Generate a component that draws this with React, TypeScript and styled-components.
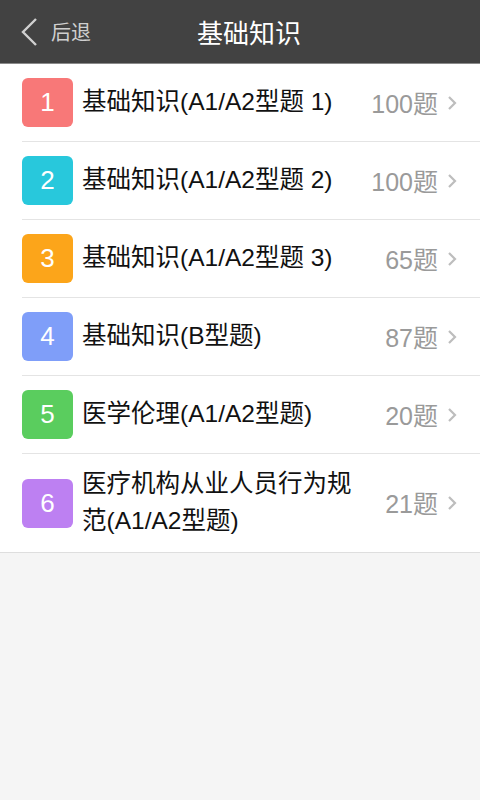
import React from "react";
import styled, { createGlobalStyle } from "styled-components";

const GlobalStyle = createGlobalStyle`
  html, body {
    margin: 0;
    padding: 0;
    background: #f5f5f5;
    font-family: "Liberation Sans", "Noto Sans CJK SC", sans-serif;
  }
`;

const Page = styled.div`
  width: 480px;
  min-height: 800px;
  background: #f5f5f5;
`;

const TopBar = styled.div`
  position: relative;
  display: flex;
  align-items: center;
  height: 63px;
  background: #424242;
  border-bottom: 1px solid #8a8a8a;
`;

const BackButton = styled.div`
  display: flex;
  align-items: center;
  gap: 13px;
  padding-left: 20px;
  color: #cfcfcf;
  font-size: 20px;
`;

const Title = styled.div`
  position: absolute;
  left: 0;
  right: 0;
  text-align: center;
  color: #ffffff;
  font-size: 26px;
  pointer-events: none;
  padding-left: 18px;
`;

const List = styled.div`
  background: #ffffff;
  border-bottom: 1px solid #dedede;
`;

const Row = styled.div<{ $tall?: boolean }>`
  display: flex;
  align-items: center;
  margin-left: 22px;
  padding-right: 23px;
  min-height: ${(p) => (p.$tall ? "98px" : "77px")};
  border-bottom: 1px solid #e4e4e4;

  &:last-child {
    border-bottom: none;
  }
`;

const Badge = styled.div<{ $color: string }>`
  flex: none;
  width: 51px;
  height: 49px;
  border-radius: 6px;
  background: ${(p) => p.$color};
  color: #ffffff;
  display: flex;
  align-items: center;
  justify-content: center;
  font-size: 26px;
`;

const Name = styled.div`
  flex: 1;
  margin-left: 9px;
  color: #111111;
  font-size: 24.5px;
  line-height: 37px;
  padding-right: 24px;
  margin-top: -2px;
`;

const Count = styled.div`
  color: #9a9a9a;
  font-size: 25px;
  white-space: nowrap;
  margin-top: -2px;
`;

const Chevron = styled.svg`
  margin-left: 9px;
  flex: none;
`;

const items = [
  { n: 1, color: "#f87878", name: "基础知识(A1/A2型题 1)", count: "100题" },
  { n: 2, color: "#28c8dc", name: "基础知识(A1/A2型题 2)", count: "100题" },
  { n: 3, color: "#fca51a", name: "基础知识(A1/A2型题 3)", count: "65题" },
  { n: 4, color: "#7f9ef9", name: "基础知识(B型题)", count: "87题" },
  { n: 5, color: "#5acd5e", name: "医学伦理(A1/A2型题)", count: "20题" },
  { n: 6, color: "#bd80f2", name: "医疗机构从业人员行为规范(A1/A2型题)", count: "21题", tall: true },
];

const App: React.FC = () => {
  return (
    <Page>
      <GlobalStyle />
      <TopBar>
        <BackButton>
          <svg width="18" height="30" viewBox="0 0 18 30">
            <path d="M16 2 L3 15 L16 28" fill="none" stroke="#d0d0d0" strokeWidth="2.4" />
          </svg>
          后退
        </BackButton>
        <Title>基础知识</Title>
      </TopBar>
      <List>
        {items.map((it) => (
          <Row key={it.n} $tall={it.tall}>
            <Badge $color={it.color}>{it.n}</Badge>
            <Name>{it.name}</Name>
            <Count>{it.count}</Count>
            <Chevron width="10" height="16" viewBox="0 0 10 16">
              <path d="M2 2 L8 8 L2 14" fill="none" stroke="#bdbdbd" strokeWidth="2.2" />
            </Chevron>
          </Row>
        ))}
      </List>
    </Page>
  );
};

export default App;
